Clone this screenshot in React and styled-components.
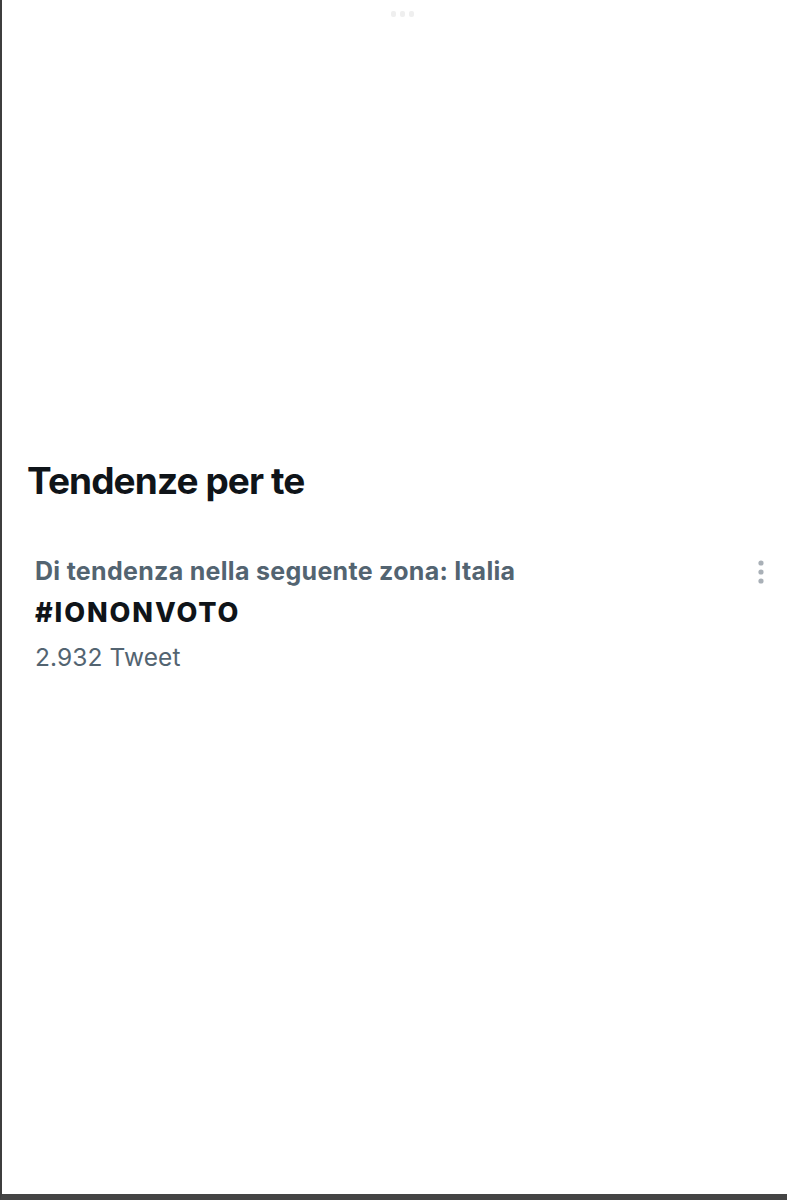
import React from "react";
import styled, { createGlobalStyle } from "styled-components";

const Global = createGlobalStyle`
  html, body { margin: 0; padding: 0; background: #ffffff; }
  body { font-family: Inter, "Liberation Sans", Arial, sans-serif; }
  * { box-sizing: border-box; }
`;

const Frame = styled.div`
  width: 787px;
  height: 1200px;
  background: #ffffff;
  border-left: 2px solid #3d3d3d;
  border-bottom: 6px solid #444444;
  display: flex;
  flex-direction: column;
`;

const Handle = styled.div`
  display: flex;
  justify-content: center;
  gap: 4px;
  padding: 11px 0 0 16px;
  height: 28px;
`;

const HandleDot = styled.span`
  width: 5px;
  height: 6px;
  border-radius: 2px;
  background: #efefef;
`;

const Section = styled.section`
  padding: 430px 22px 0 25px;
  display: flex;
  flex-direction: column;
`;

const Heading = styled.h2`
  margin: 0;
  font-family: Inter, "Liberation Sans", Arial, sans-serif;
  font-weight: 700;
  font-size: 37px;
  line-height: 46px;
  color: #0f1419;
  letter-spacing: -0.9px;
`;

const Trend = styled.div`
  margin-top: 46px;
  padding-left: 8px;
  display: flex;
  justify-content: space-between;
  align-items: flex-start;
`;

const TrendText = styled.div`
  display: flex;
  flex-direction: column;
  font-family: Inter, "Liberation Sans", Arial, sans-serif;
`;

const Context = styled.div`
  font-weight: 700;
  font-size: 25px;
  line-height: 42px;
  letter-spacing: 0.3px;
  color: #536471;
`;

const Tag = styled.div`
  font-weight: 800;
  font-size: 27px;
  line-height: 42px;
  letter-spacing: 1.9px;
  color: #0f1419;
`;

const Count = styled.div`
  margin-top: 2px;
  font-weight: 400;
  font-size: 24.5px;
  line-height: 42px;
  letter-spacing: 0.1px;
  color: #536471;
`;

const MenuButton = styled.button`
  border: 0;
  background: transparent;
  padding: 0;
  margin-top: 10px;
  width: 8px;
  display: flex;
  justify-content: center;
  cursor: pointer;
`;

function MoreIcon() {
  return (
    <svg width="6" height="26" viewBox="0 0 6 26" aria-hidden="true">
      <circle cx="3" cy="3" r="2.6" fill="#a9b0b7" />
      <circle cx="3" cy="12" r="2.6" fill="#a9b0b7" />
      <circle cx="3" cy="21" r="2.6" fill="#a9b0b7" />
    </svg>
  );
}

export default function App() {
  return (
    <>
      <Global />
      <Frame>
        <Handle>
          <HandleDot />
          <HandleDot />
          <HandleDot />
        </Handle>
        <Section>
          <Heading>Tendenze per te</Heading>
          <Trend>
            <TrendText>
              <Context>Di tendenza nella seguente zona: Italia</Context>
              <Tag>#IONONVOTO</Tag>
              <Count>2.932 Tweet</Count>
            </TrendText>
            <MenuButton aria-label="Altro">
              <MoreIcon />
            </MenuButton>
          </Trend>
        </Section>
      </Frame>
    </>
  );
}
